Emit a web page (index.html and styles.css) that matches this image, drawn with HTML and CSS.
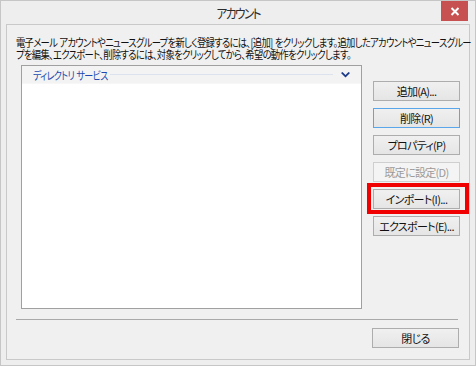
FILE: index.html
```html
<!DOCTYPE html>
<html lang="ja">
<head>
<meta charset="utf-8">
<link rel="stylesheet" href="styles.css">
</head>
<body>
<div class="window">
  <div class="titlebar">
    <span></span>
    <span class="title">アカウント</span>
    <button class="close" aria-label="閉じる">
      <svg width="10" height="9" viewBox="0 0 10 9"><path d="M1.5 1 L8.5 8 M8.5 1 L1.5 8" stroke="#fff" stroke-width="2" fill="none"/></svg>
    </button>
  </div>
  <div class="client">
    <p class="desc"><span class="line">電子メール アカウントやニュースグループを新しく登録するには、[追加] をクリックします。追加したアカウントやニュースグルー</span><span class="line">プを編集、エクスポート、削除するには、対象をクリックしてから、希望の動作をクリックします。</span></p>
    <div class="main">
      <div class="listbox">
        <div class="group">
          <span class="group-name"><span class="group-name-inner">ディレクトリ サービス</span></span>
          <span class="group-line"></span>
          <svg class="chev" width="9" height="6" viewBox="0 0 9 6"><path d="M0 1 L1.5 0 L4.5 3 L7.5 0 L9 1 L4.5 5.5 Z" fill="#1c3a8a"/></svg>
        </div>
      </div>
      <div class="buttons">
        <button class="btn">追加(A)...</button>
        <button class="btn focused">削除(R)</button>
        <button class="btn">プロパティ(P)</button>
        <button class="btn disabled">既定に設定(D)</button>
        <button class="btn marked">インポート(I)...</button>
        <button class="btn">エクスポート(E)...</button>
      </div>
    </div>
    <div class="sep"></div>
    <div class="footer">
      <button class="btn">閉じる</button>
    </div>
  </div>
</div>
</body>
</html>
```

FILE: styles.css
```css
html, body {
  margin: 0;
  padding: 0;
  background: #ffffff;
}
body {
  font-family: "Noto Sans CJK JP", "Noto Sans", sans-serif;
  font-feature-settings: "palt";
  color: #000;
}
.window {
  width: 476px;
  height: 366px;
  box-sizing: border-box;
  border: 1px solid #c6c6c6;
  background: #eeeeee;
  padding: 0 5px 5px 5px;
  display: flex;
  flex-direction: column;
}
.titlebar {
  height: 23px;
  display: grid;
  grid-template-columns: 1fr auto 1fr;
  align-items: start;
}
.title {
  font-size: 13px;
  line-height: 14px;
  margin-top: 5px;
  color: #2b2b2b;
  letter-spacing: -1.8px;
  display: inline-block;
  transform: scaleX(0.9);
  transform-origin: center;
}
.close {
  justify-self: end;
  width: 27px;
  height: 20px;
  margin-right: 2px;
  border: none;
  padding: 0;
  background: #c75050;
  display: flex;
  align-items: center;
  justify-content: center;
}
.client {
  flex: 1;
  border: 1px solid #c9c9c9;
  background: #f0f0f0;
  display: flex;
  flex-direction: column;
}
.desc {
  margin: 11px 0 0 9px;
  font-size: 11px;
  line-height: 12px;
  letter-spacing: -0.8px;
  word-spacing: 1px;
  color: #111;
}
.line {
  display: block;
  white-space: nowrap;
  width: max-content;
  transform: scaleX(0.845);
  transform-origin: left center;
}
.main {
  display: flex;
  margin: 5px 0 0 14px;
}
.listbox {
  width: 341px;
  height: 244px;
  box-sizing: border-box;
  border: 1px solid #a0a0a0;
  background: #ffffff;
}
.group {
  height: 17px;
  background: #f3f3f3;
  display: flex;
  align-items: center;
  padding: 0 11px 0 11px;
  border-bottom: 1px solid #f7f7f7;
}
.group-name {
  flex: none;
  width: 73px;
  font-size: 11px;
  line-height: 14px;
  color: #2148b0;
  letter-spacing: -0.8px;
  word-spacing: 1px;
  white-space: nowrap;
}
.group-name-inner {
  display: inline-block;
  transform: scaleX(0.82);
  transform-origin: left center;
}
.group-line {
  flex: 1;
  height: 1px;
  background: #dde3ee;
  margin: 0 8px 0 4px;
}
.chev {
  display: block;
}
.buttons {
  display: flex;
  flex-direction: column;
  gap: 7px;
  margin-left: 11px;
  padding-top: 16px;
}
.btn {
  width: 87px;
  height: 20px;
  box-sizing: border-box;
  border: 1px solid #adadad;
  background: linear-gradient(#f0f0f0, #e5e5e5);
  font-family: "Noto Sans CJK JP", "Noto Sans", sans-serif;
  font-feature-settings: "palt";
  font-size: 11px;
  letter-spacing: -0.7px;
  color: #111;
  padding: 0;
  line-height: 17px;
  position: relative;
}
.btn.focused {
  border-color: #5aa6ea;
}
.btn.disabled {
  color: #9a9a9a;
  border-color: #cfcfcf;
  background: #f4f4f4;
}
.btn.marked::after {
  content: "";
  position: absolute;
  left: -7px;
  right: -10px;
  top: -7px;
  bottom: -6px;
  border: 4px solid #f00000;
}
.sep {
  height: 1px;
  background: #a9a9a9;
  margin: 10px 11px 0 9px;
}
.footer {
  display: flex;
  justify-content: flex-end;
  margin: 8px 10px 0 0;
}
```
